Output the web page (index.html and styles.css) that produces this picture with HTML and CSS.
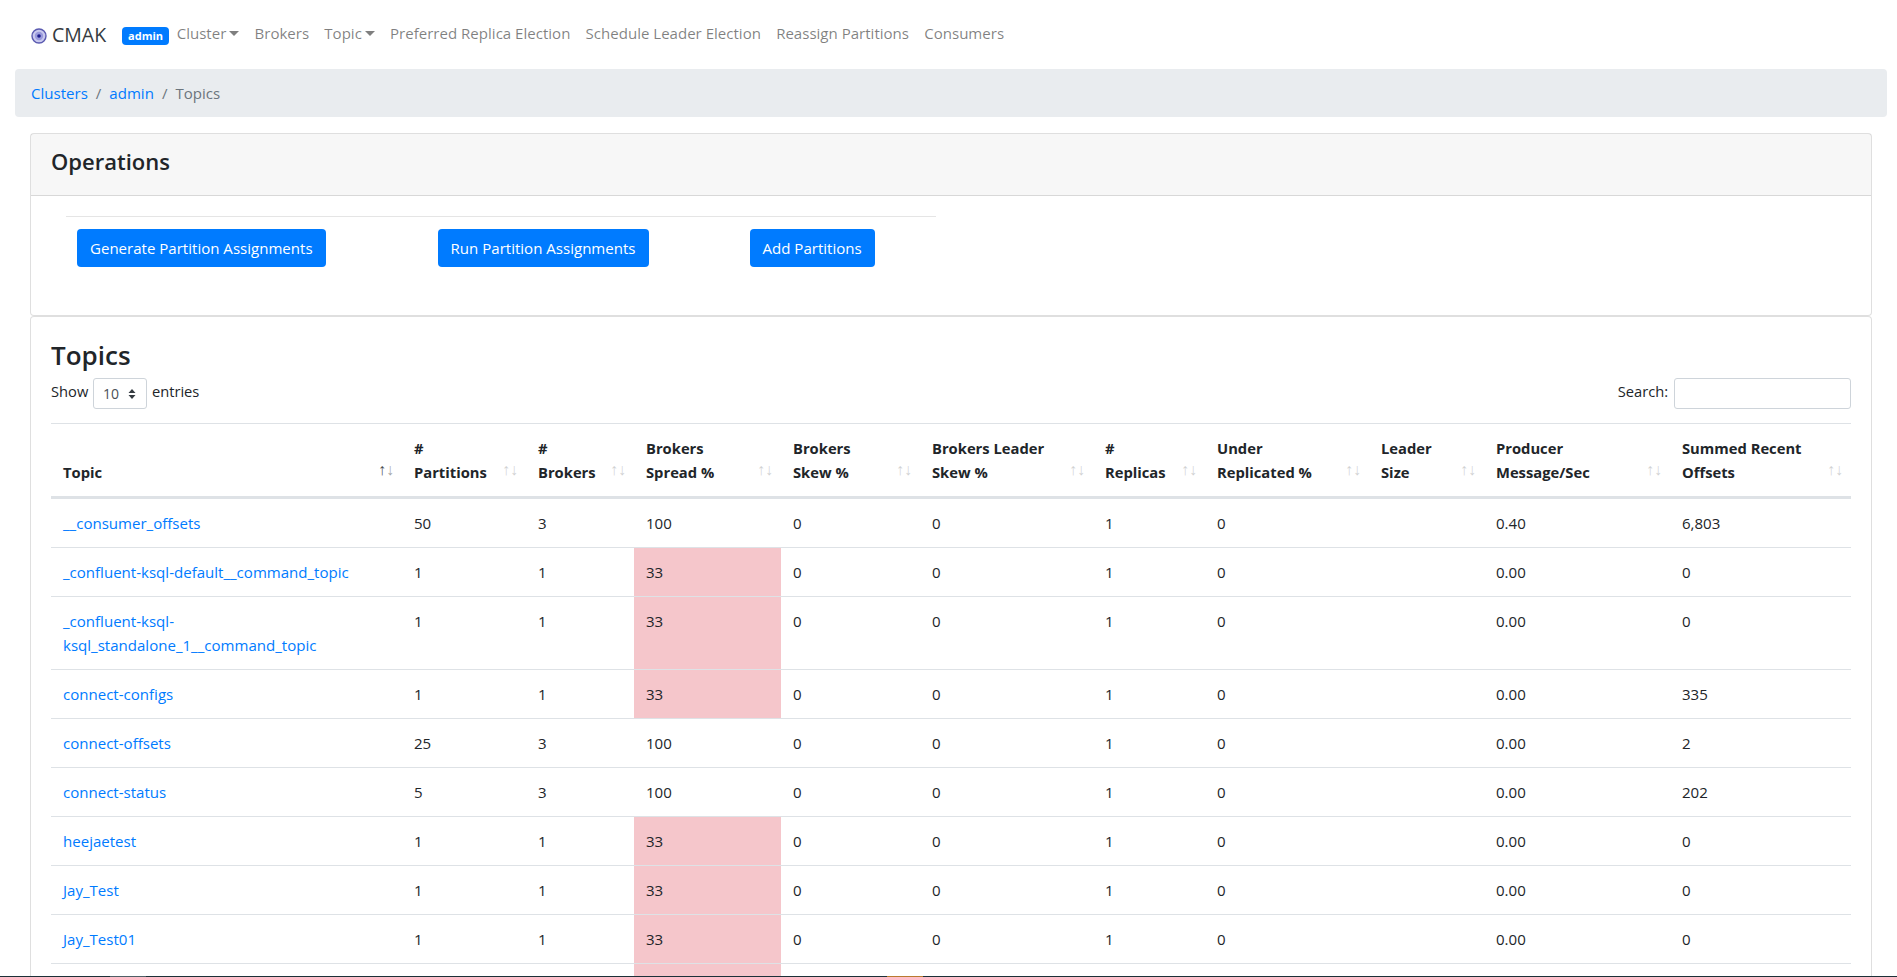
FILE: index.html
```html
<!DOCTYPE html>
<html lang="en">
<head>
<meta charset="utf-8">
<title>CMAK</title>
<link rel="stylesheet" href="styles.css">
</head>
<body>
<nav class="navbar">
  <a class="brand" href="#"><svg class="logo" width="16" height="16" viewBox="0 0 16 16"><circle cx="8" cy="8" r="7" fill="#c9c9ee" stroke="#5a5ab0" stroke-width="1.4"/><circle cx="8" cy="8" r="4.2" fill="#9a9adc"/><circle cx="8" cy="8" r="1.8" fill="#1c1c8c"/></svg>CMAK</a>
  <span class="badge">admin</span>
  <a class="nav-link caret" href="#">Cluster</a>
  <a class="nav-link" href="#">Brokers</a>
  <a class="nav-link caret" href="#">Topic</a>
  <a class="nav-link" href="#">Preferred Replica Election</a>
  <a class="nav-link" href="#">Schedule Leader Election</a>
  <a class="nav-link" href="#">Reassign Partitions</a>
  <a class="nav-link" href="#">Consumers</a>
</nav>
<ol class="breadcrumb">
  <li><a href="#">Clusters</a></li>
  <li class="sep">/</li>
  <li><a href="#">admin</a></li>
  <li class="sep">/</li>
  <li class="active">Topics</li>
</ol>
<main class="wrap">
  <section class="card ops">
    <h4 class="card-header">Operations</h4>
    <div class="ops-body">
      <div class="btn-row">
        <a class="btn btn-a" href="#">Generate Partition Assignments</a>
        <a class="btn btn-b" href="#">Run Partition Assignments</a>
        <a class="btn" href="#">Add Partitions</a>
      </div>
    </div>
  </section>
  <section class="card topics">
    <h3 class="title">Topics</h3>
    <div class="controls">
      <label class="length">Show <span class="select">10<svg width="8" height="12" viewBox="0 0 8 12"><path d="M4 1 7.5 5H.5zM4 11 .5 7h7z" fill="#343a40"/></svg></span> entries</label>
      <label class="search">Search: <input type="text" aria-label="Search"></label>
    </div>
    <table>
      <colgroup>
        <col class="c1"><col class="c2"><col class="c3"><col class="c4"><col class="c5"><col class="c6"><col class="c7"><col class="c8"><col class="c9"><col class="c10"><col class="c11">
      </colgroup>
      <thead>
        <tr>
          <th class="asc">Topic</th><th># Partitions</th><th># Brokers</th><th>Brokers Spread %</th><th>Brokers Skew %</th><th>Brokers Leader Skew %</th><th># Replicas</th><th>Under Replicated %</th><th>Leader Size</th><th>Producer Message/Sec</th><th>Summed Recent Offsets</th>
        </tr>
      </thead>
      <tbody>
        <tr><td><a href="#">__consumer_offsets</a></td><td>50</td><td>3</td><td>100</td><td>0</td><td>0</td><td>1</td><td>0</td><td></td><td>0.40</td><td>6,803</td></tr>
        <tr><td><a href="#">_confluent-ksql-default__command_topic</a></td><td>1</td><td>1</td><td class="danger">33</td><td>0</td><td>0</td><td>1</td><td>0</td><td></td><td>0.00</td><td>0</td></tr>
        <tr><td><a href="#">_confluent-ksql-ksql_standalone_1__command_topic</a></td><td>1</td><td>1</td><td class="danger">33</td><td>0</td><td>0</td><td>1</td><td>0</td><td></td><td>0.00</td><td>0</td></tr>
        <tr><td><a href="#">connect-configs</a></td><td>1</td><td>1</td><td class="danger">33</td><td>0</td><td>0</td><td>1</td><td>0</td><td></td><td>0.00</td><td>335</td></tr>
        <tr><td><a href="#">connect-offsets</a></td><td>25</td><td>3</td><td>100</td><td>0</td><td>0</td><td>1</td><td>0</td><td></td><td>0.00</td><td>2</td></tr>
        <tr><td><a href="#">connect-status</a></td><td>5</td><td>3</td><td>100</td><td>0</td><td>0</td><td>1</td><td>0</td><td></td><td>0.00</td><td>202</td></tr>
        <tr><td><a href="#">heejaetest</a></td><td>1</td><td>1</td><td class="danger">33</td><td>0</td><td>0</td><td>1</td><td>0</td><td></td><td>0.00</td><td>0</td></tr>
        <tr><td><a href="#">Jay_Test</a></td><td>1</td><td>1</td><td class="danger">33</td><td>0</td><td>0</td><td>1</td><td>0</td><td></td><td>0.00</td><td>0</td></tr>
        <tr><td><a href="#">Jay_Test01</a></td><td>1</td><td>1</td><td class="danger">33</td><td>0</td><td>0</td><td>1</td><td>0</td><td></td><td>0.00</td><td>0</td></tr>
        <tr><td></td><td></td><td></td><td class="danger"></td><td></td><td></td><td></td><td></td><td></td><td></td><td></td></tr>
      </tbody>
    </table>
  </section>
</main>
<div class="edge"><span class="edge-tab"></span><span class="edge-app"></span></div>
</body>
</html>
```
FILE: styles.css
```css
* { box-sizing: border-box; }
html, body { height: 977px; overflow: hidden; }
body { margin: 0; background: #fff; color: #212529; font: 15.05px/24px "Open Sans", sans-serif; }
a { color: #007bff; text-decoration: none; }
.navbar { display: flex; align-items: center; height: 69px; padding: 0 16px 0 31px; }
.brand { display: flex; align-items: center; color: #343a40; font-size: 19.5px; margin-right: 8px; }
.logo { margin-right: 5px; margin-top: 3px; }
.badge { background: #007bff; color: #fff; font-size: 11px; font-weight: 700; line-height: 12px; height: 18px; padding: 3px 6px; border-radius: 4px; margin: 3px 0 0 8px; }
.nav-link { color: rgba(0,0,0,.5); padding: 0 7.6px; margin-top: -4px; }
.caret::after { content: ""; display: inline-block; margin-left: 3px; vertical-align: 3px; border-top: 5px solid; border-left: 5px solid transparent; border-right: 5px solid transparent; }
.breadcrumb { display: flex; align-items: center; gap: 8px; list-style: none; margin: 0 10px 0 15px; height: 48px; padding: 0 16px; background: #e9ecef; border-radius: 4px; }
.sep, .active { color: #6c757d; }
.wrap { padding: 16px 25px 0 30px; }
.card { border: 1px solid rgba(0,0,0,.125); background: #fff; border-radius: 4px; }
.ops { height: 183px; }
.card-header { margin: 0; height: 62px; padding: 0 20px 8px; display: flex; align-items: center; background: rgba(0,0,0,.03); border-bottom: 1px solid rgba(0,0,0,.125); font-size: 22px; font-weight: 600; }
.ops-body { padding: 20px 0 0 35px; }
.btn-row { width: 870px; border-top: 1px solid rgba(0,0,0,.1); padding: 12px 0 0 11px; display: flex; }
.btn { background: #007bff; color: #fff; height: 38px; line-height: 38px; padding: 0 13px; border-radius: 4px; }
.btn-a { margin-right: 112px; }
.btn-b { margin-right: 101px; }
.topics { padding: 21px 20px 0; height: 700px; margin-top: 0; }
.title { margin: 0; font-size: 26px; line-height: 34px; font-weight: 600; }
.controls { display: flex; justify-content: space-between; align-items: center; height: 31px; margin-top: 6px; font-size: 14.7px; }
.select { display: inline-flex; align-items: center; gap: 9px; width: 54px; height: 31px; padding: 0 8px 0 9px; margin: 0 1px; border: 1px solid #ced4da; border-radius: 3px; font-size: 14px; color: #495057; vertical-align: middle; }
.search input { width: 177px; height: 31px; border: 1px solid #ced4da; border-radius: 3px; margin-left: 2px; vertical-align: middle; background: #fff; }
table { width: 100%; table-layout: fixed; border-collapse: collapse; margin-top: 14px; }
.c1 { width: 351px; } .c2 { width: 124px; } .c3 { width: 108px; } .c4 { width: 147px; } .c5 { width: 139px; } .c6 { width: 173px; } .c7 { width: 112px; } .c8 { width: 164px; } .c9 { width: 115px; } .c10 { width: 186px; } .c11 { width: auto; }
th { position: relative; padding: 12px 30px 12px 12px; text-align: left; vertical-align: bottom; font-size: 14.75px; font-weight: 700; border-top: 1px solid #dee2e6; border-bottom: 3px solid #dee2e6; }
th::before, th::after { position: absolute; bottom: 14px; opacity: .2; font: 16px/24px "Liberation Sans", sans-serif; }
th::before { content: "\2191"; right: 16px; }
th::after { content: "\2193"; right: 8px; }
th.asc::before { opacity: .8; }
th.asc::after { opacity: .4; }
td { padding: 12px; vertical-align: top; border-top: 1px solid #dee2e6; height: 49px; }
.danger { background: #f5c6cb; }
.edge { position: fixed; left: 0; right: 0; bottom: 0; height: 1px; background: #1d3038; }
.edge-tab { position: absolute; left: 110px; width: 36px; height: 1px; background: #4f5f66; }
.edge-app { position: absolute; left: 887px; width: 36px; height: 1px; background: #b87a30; }
```
